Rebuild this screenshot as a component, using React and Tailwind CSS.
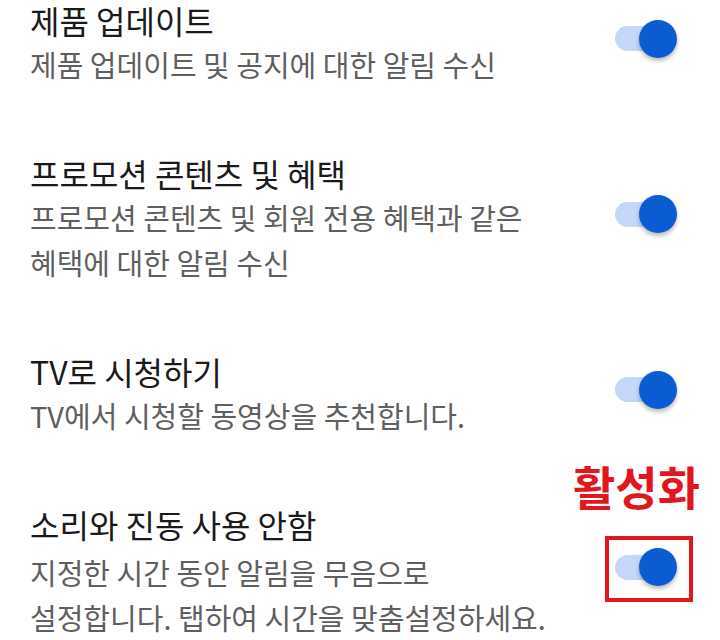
import React from "react";

const FONT = { fontFamily: '"Noto Sans CJK KR", "Noto Sans", sans-serif' };

function Toggle({ highlight }) {
  return (
    <div className="relative w-[62px] h-[38px] shrink-0 mb-[10px]">
      <div className="absolute left-0 top-[6.5px] w-[50px] h-[25px] rounded-full bg-[#c3d7f6]" />
      <div className="absolute right-0 top-0 w-[38px] h-[38px] rounded-full bg-[#0b5bd3] shadow-[0_3px_4px_rgba(0,0,0,0.28)]" />
      {highlight && (
        <div className="absolute -left-[10px] -top-[12px] w-[88px] h-[66px] border-4 border-[#e3161e]" />
      )}
    </div>
  );
}

function Row({ title, lines, highlight, titleGap = "mb-[2px]" }) {
  return (
    <div className="relative flex items-center justify-between pl-[30px] pr-[43px]">
      {highlight && (
        <div className="absolute right-[20px] -top-[42px] text-[46px] leading-[46px] font-bold text-[#e3161e]">
          활성화
        </div>
      )}
      <div className="flex flex-col">
        <div className={`text-[32px] leading-[40px] text-[#1a1a1a] ${titleGap}`}>{title}</div>
        {lines.map((l, i) => (
          <div key={i} className="text-[29px] leading-[45px] text-[#5f5f5f]">
            {l}
          </div>
        ))}
      </div>
      <Toggle highlight={highlight} />
    </div>
  );
}

export default function App() {
  return (
    <div className="w-[720px] h-[640px] overflow-hidden bg-white" style={FONT}>
      <div className="flex flex-col gap-[66px]">
        <Row title="제품 업데이트" lines={["제품 업데이트 및 공지에 대한 알림 수신"]} />
        <Row
          title="프로모션 콘텐츠 및 혜택"
          lines={["프로모션 콘텐츠 및 회원 전용 혜택과 같은", "혜택에 대한 알림 수신"]}
        />
        <Row title="TV로 시청하기" lines={["TV에서 시청할 동영상을 추천합니다."]} />
        <Row
          title="소리와 진동 사용 안함"
          titleGap="mb-[6px]"
          highlight
          lines={["지정한 시간 동안 알림을 무음으로", "설정합니다. 탭하여 시간을 맞춤설정하세요."]}
        />
      </div>
    </div>
  );
}
